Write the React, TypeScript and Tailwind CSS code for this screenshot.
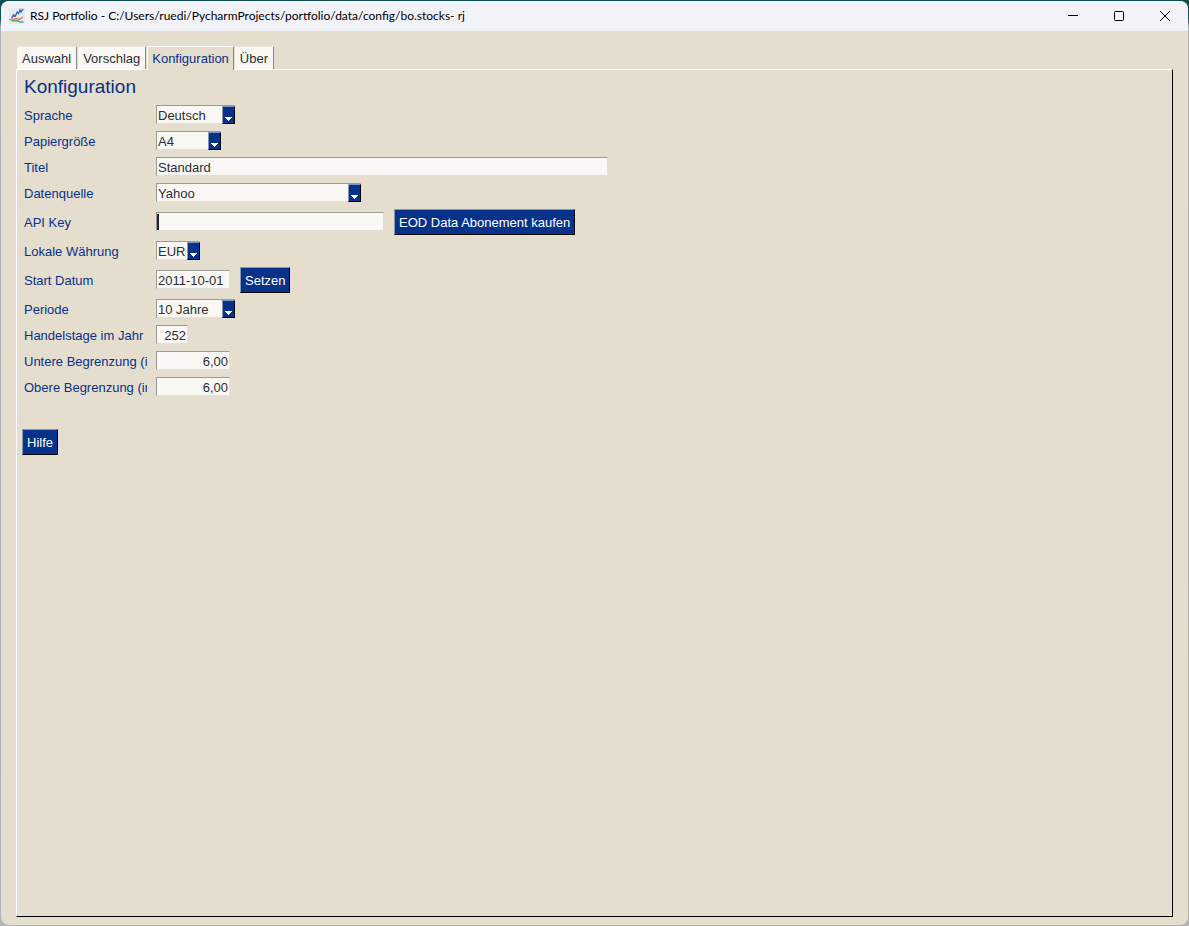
import { useState } from "react";
import type { ReactNode } from "react";

const TABS = ["Auswahl", "Vorschlag", "Konfiguration", "Über"];

function AppIcon() {
  return (
    <svg width="16" height="16" viewBox="0 0 16 16" fill="none" aria-hidden>
      <rect width="16" height="16" fill="#e6e9f0" />
      <path d="M2.5 10 L4.5 7 L6.5 8 L8 4 L9.5 5.5 L11 2 L12 4 L14 1" stroke="#3f6fb5" strokeWidth="1.4" />
      <path d="M3 9.5 L4 11.5 L7 10.5 L10 11.5 L14 9" stroke="#e0714f" strokeWidth="1.2" />
      <path d="M0.5 11 L4 13 L8 12.5 L11 14 L14.5 14" stroke="#5fa874" strokeWidth="1.4" />
    </svg>
  );
}

function TitleBar() {
  return (
    <header className="flex h-[30px] shrink-0 items-center bg-[#f2f2f9] pl-2">
      <AppIcon />
      <h1 className="flex-1 truncate pl-[5px] font-[Lato,'Noto_Sans',sans-serif] text-[12px] leading-4 text-black">
        RSJ Portfolio - C:/Users/ruedi/PycharmProjects/portfolio/data/config/bo.stocks- rj
      </h1>
      <button aria-label="Minimieren" className="flex h-full w-[46px] items-center justify-center">
        <svg width="10" height="10" viewBox="0 0 10 10" aria-hidden>
          <path d="M0 4.5H10" stroke="#000" />
        </svg>
      </button>
      <button aria-label="Maximieren" className="flex h-full w-[46px] items-center justify-center">
        <svg width="10" height="10" viewBox="0 0 10 10" fill="none" aria-hidden>
          <rect x="0.5" y="0.5" width="9" height="9" rx="1" stroke="#000" />
        </svg>
      </button>
      <button aria-label="Schließen" className="flex h-full w-[46px] items-center justify-center">
        <svg width="10" height="10" viewBox="0 0 10 10" aria-hidden>
          <path d="M0 0L10 10M10 0L0 10" stroke="#000" />
        </svg>
      </button>
    </header>
  );
}

function Row({ label, id, children }: { label: string; id: string; children: ReactNode }) {
  return (
    <div className="flex items-center gap-2.5 py-[3px]">
      <label htmlFor={id} className="-mr-px w-[125px] shrink-0 overflow-hidden whitespace-nowrap pt-[2px] pl-[2px] text-[#063289]">
        {label}
      </label>
      {children}
    </div>
  );
}

const FIELD =
  "h-[19px] border border-t-[#9a9a96] border-l-[#9a9a96] border-r-[#dfdfdc] border-b-[#dfdfdc] bg-[#f9f8f4] text-[#2c2e35] outline-none";

function TextField({ id, width, value, right }: { id: string; width: string; value: string; right?: boolean }) {
  return (
    <input
      id={id}
      type="text"
      defaultValue={value}
      className={`${FIELD} ${width} mb-px px-px pt-px ${right ? "text-right" : ""}`}
    />
  );
}

function Combo({ id, width, options }: { id: string; width: string; options: string[] }) {
  return (
    <div className={`relative mb-px flex ${width}`}>
      <select id={id} className={`${FIELD} w-full appearance-none pt-[2px] pl-px`}>
        {options.map((o) => (
          <option key={o}>{o}</option>
        ))}
      </select>
      <span className="pointer-events-none absolute top-px right-0 bottom-0 flex w-[13px] items-end justify-center border border-t-[#8298c4] border-l-[#8298c4] border-r-black border-b-black bg-[#063289] pb-[2px]">
        <svg width="7" height="4" viewBox="0 0 7 4" fill="#fff" aria-hidden>
          <path d="M0 0H7V1H6V2H5V3H4V4H3V3H2V2H1V1H0Z" />
        </svg>
      </span>
    </div>
  );
}

function PushButton({ children }: { children: ReactNode }) {
  return (
    <button className="h-[26px] border border-t-[#8298c4] border-l-[#8298c4] border-r-black border-b-black bg-[#063289] px-1 pt-[2px] whitespace-nowrap text-white">
      {children}
    </button>
  );
}

function ConfigForm() {
  return (
    <form onSubmit={(e) => e.preventDefault()}>
      <h2 className="pt-[5px] pb-[3px] pl-[2px] text-[19px] leading-6 text-[#063289]">Konfiguration</h2>
      <Row id="lang" label="Sprache">
        <Combo id="lang" width="w-[79px]" options={["Deutsch", "English"]} />
      </Row>
      <Row id="paper" label="Papiergröße">
        <Combo id="paper" width="w-[65px]" options={["A4", "Letter"]} />
      </Row>
      <Row id="title" label="Titel">
        <TextField id="title" width="w-[452px]" value="Standard" />
      </Row>
      <Row id="source" label="Datenquelle">
        <Combo id="source" width="w-[205px]" options={["Yahoo", "EOD Data"]} />
      </Row>
      <Row id="apikey" label="API Key">
        <div className="relative flex">
          <TextField id="apikey" width="w-[228px]" value="" />
          <span className="pointer-events-none absolute top-[2px] bottom-[2px] left-px w-[2px] bg-[#22242c]" />
        </div>
        <PushButton>EOD Data Abonement kaufen</PushButton>
      </Row>
      <Row id="currency" label="Lokale Währung">
        <Combo id="currency" width="w-[44px]" options={["EUR", "CHF", "USD"]} />
      </Row>
      <Row id="start" label="Start Datum">
        <TextField id="start" width="w-[74px]" value="2011-10-01" />
        <PushButton>Setzen</PushButton>
      </Row>
      <Row id="period" label="Periode">
        <Combo id="period" width="w-[79px]" options={["10 Jahre", "5 Jahre", "1 Jahr"]} />
      </Row>
      <Row id="days" label="Handelstage im Jahr">
        <TextField id="days" width="w-[32px]" value="252" right />
      </Row>
      <Row id="lower" label="Untere Begrenzung (in %)">
        <TextField id="lower" width="w-[74px]" value="6,00" right />
      </Row>
      <Row id="upper" label="Obere Begrenzung (in %)">
        <TextField id="upper" width="w-[74px]" value="6,00" right />
      </Row>
      <div className="mt-[29px] flex">
        <PushButton>Hilfe</PushButton>
      </div>
    </form>
  );
}

export default function App() {
  const [active, setActive] = useState("Konfiguration");

  return (
    <div className="flex min-h-screen bg-linear-to-b from-[#0f4f52] from-2% via-[#aeb0b2] via-3% to-[#b4b4b4] to-100% p-px font-['Liberation_Sans',Arial,sans-serif] text-[13px] leading-4">
      <div className="flex min-w-0 flex-1 flex-col overflow-hidden rounded-lg bg-[#e5ddce]">
        <TitleBar />
        <main className="flex flex-1 flex-col px-[15px] pt-[15px] pb-2">
          <div role="tablist" className="flex gap-px pl-px">
            {TABS.map((t) => (
              <button
                key={t}
                role="tab"
                aria-selected={t === active}
                onClick={() => setActive(t)}
                className={
                  t === active
                    ? "relative z-10 -mb-px h-6 rounded-t-[2px] border-t border-r border-l border-t-white border-r-[#8a8a86] border-l-white bg-[#e5ddce] px-1 pt-px text-[#063289]"
                    : "h-[23px] rounded-t-[2px] border-t border-r border-t-[#e9e7e1] border-r-[#8a8a86] bg-[#f9f8f4] px-[5px] pt-[2px] text-[#2c2e35]"
                }
              >
                {t}
              </button>
            ))}
          </div>
          <section className="flex-1 border border-t-white border-r-black border-b-black border-l-white px-[5px]">
            {active === "Konfiguration" && <ConfigForm />}
          </section>
        </main>
      </div>
    </div>
  );
}
